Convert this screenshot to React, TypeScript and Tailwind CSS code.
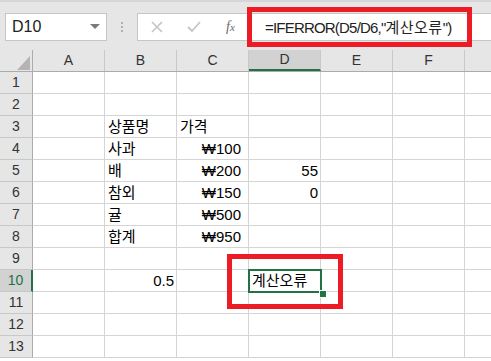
import React from "react";

const font = { fontFamily: '"Liberation Sans", "Noto Sans CJK KR", sans-serif' };

const cols = ["A", "B", "C", "D", "E", "F", "G"];

type Cell = { text: string; align?: "l" | "r"; pr?: string };

const data: Record<number, Record<string, Cell>> = {
  3: { B: { text: "상품명" }, C: { text: "가격" } },
  4: { B: { text: "사과" }, C: { text: "₩100", align: "r", pr: "pr-[7px]" } },
  5: {
    B: { text: "배" },
    C: { text: "₩200", align: "r", pr: "pr-[7px]" },
    D: { text: "55", align: "r" },
  },
  6: {
    B: { text: "참외" },
    C: { text: "₩150", align: "r", pr: "pr-[7px]" },
    D: { text: "0", align: "r" },
  },
  7: { B: { text: "귤" }, C: { text: "₩500", align: "r", pr: "pr-[7px]" } },
  8: { B: { text: "합계" }, C: { text: "₩950", align: "r", pr: "pr-[7px]" } },
  10: { B: { text: "0.5", align: "r" }, D: { text: "계산오류" } },
};

export default function App() {
  const rows = Array.from({ length: 13 }, (_, i) => i + 1);

  return (
    <div className="relative w-[491px] h-[361px] overflow-hidden bg-white text-black" style={font}>
      {/* Formula bar */}
      <div className="h-[50px] bg-[#e6e6e6] border-t-2 border-[#d6d6d6] flex items-start pt-[11px]">
        <div className="ml-[5px] w-[102px] h-[28px] bg-white border border-[#c6c6c6] flex items-center justify-between pl-[6px] pr-[6px]">
          <span className="text-[16px] leading-none text-[#222]">D10</span>
          <svg width="10" height="6" viewBox="0 0 10 6">
            <path d="M0 0 L10 0 L5 5 Z" fill="#7a7a7a" />
          </svg>
        </div>
        <div className="w-[30px] h-[28px] flex flex-col items-center justify-center gap-[2px]">
          <div className="w-[2px] h-[2px] bg-[#b0b0b0]" />
          <div className="w-[2px] h-[2px] bg-[#b0b0b0]" />
          <div className="w-[2px] h-[2px] bg-[#b0b0b0]" />
        </div>
        <div className="flex-1 min-w-0 h-[28px] bg-white border border-[#c6c6c6] border-r-0 flex items-center">
          <div className="w-[37px] flex justify-center">
            <svg width="12" height="12" viewBox="0 0 12 12">
              <path d="M1 1 L11 11 M11 1 L1 11" stroke="#c4c4c4" strokeWidth="1.6" />
            </svg>
          </div>
          <div className="w-[37px] flex justify-center">
            <svg width="14" height="12" viewBox="0 0 14 12">
              <path d="M1 6 L5 10 L13 1" stroke="#c4c4c4" strokeWidth="1.8" fill="none" />
            </svg>
          </div>
          <div className="w-[37px] flex justify-center">
            <span
              className="text-[14px] italic text-[#6a6a6a] leading-none"
              style={{ fontFamily: '"Liberation Serif", serif' }}
            >
              f<span className="text-[11px]">x</span>
            </span>
          </div>
          <span className="ml-[16px] text-[15px] tracking-[-0.8px] leading-none text-[#222] whitespace-nowrap">
            =IFERROR(D5/D6,"<span className="tracking-[0.5px]">계산오류</span>")
          </span>
        </div>
      </div>

      {/* Column headers */}
      <div className="flex h-[22px] bg-[#e6e6e6] border-b border-[#ababab]">
        <div className="w-[33px] shrink-0 border-r border-[#ababab] relative">
          <svg className="absolute left-[17px] top-[6px]" width="13" height="14" viewBox="0 0 13 14">
            <path d="M13 0 L13 14 L0 14 Z" fill="#b4b4b4" />
          </svg>
        </div>
        {cols.map((c) => (
          <div
            key={c}
            className={`w-[72px] shrink-0 border-r border-[#c8c8c8] flex items-center justify-center text-[14px] ${
              c === "D" ? "bg-[#d2d2d2] border-b-2 border-b-[#217346] text-[#333]" : "text-[#333]"
            }`}
          >
            {c === "G" ? "" : c}
          </div>
        ))}
      </div>

      {/* Rows */}
      {rows.map((r) => (
        <div key={r} className="flex h-[22px]">
          <div
            className={`w-[33px] shrink-0 border-b border-[#c8c8c8] flex items-center justify-center text-[14px] ${
              r === 10
                ? "bg-[#d2d2d2] text-[#217346] border-r-2 border-r-[#217346]"
                : "bg-[#e6e6e6] text-[#333] border-r border-r-[#ababab]"
            }`}
          >
            {r}
          </div>
          {cols.map((c) => {
            const cell = data[r]?.[c];
            return (
              <div
                key={c}
                className={`w-[72px] shrink-0 border-r border-b border-[#d4d4d4] flex items-center text-[15px] leading-none whitespace-nowrap ${
                  cell?.align === "r" ? `justify-end ${cell.pr ?? "pr-[2px]"}` : "pl-[3px]"
                }`}
              >
                {cell?.text}
              </div>
            );
          })}
        </div>
      ))}

      {/* Active cell D10 */}
      <div className="absolute left-[248px] top-[269px] w-[74px] h-[24px] border-2 border-[#217346] pointer-events-none" />
      <div className="absolute left-[319px] top-[290px] w-[6px] h-[6px] bg-[#217346] border border-white box-content" />

      {/* Red annotations */}
      <div className="absolute left-[247px] top-[7px] w-[225px] h-[40px] border-[5px] border-[#ed1c24]" />
      <div className="absolute left-[227px] top-[254px] w-[116px] h-[55px] border-[5px] border-[#ed1c24]" />
    </div>
  );
}
